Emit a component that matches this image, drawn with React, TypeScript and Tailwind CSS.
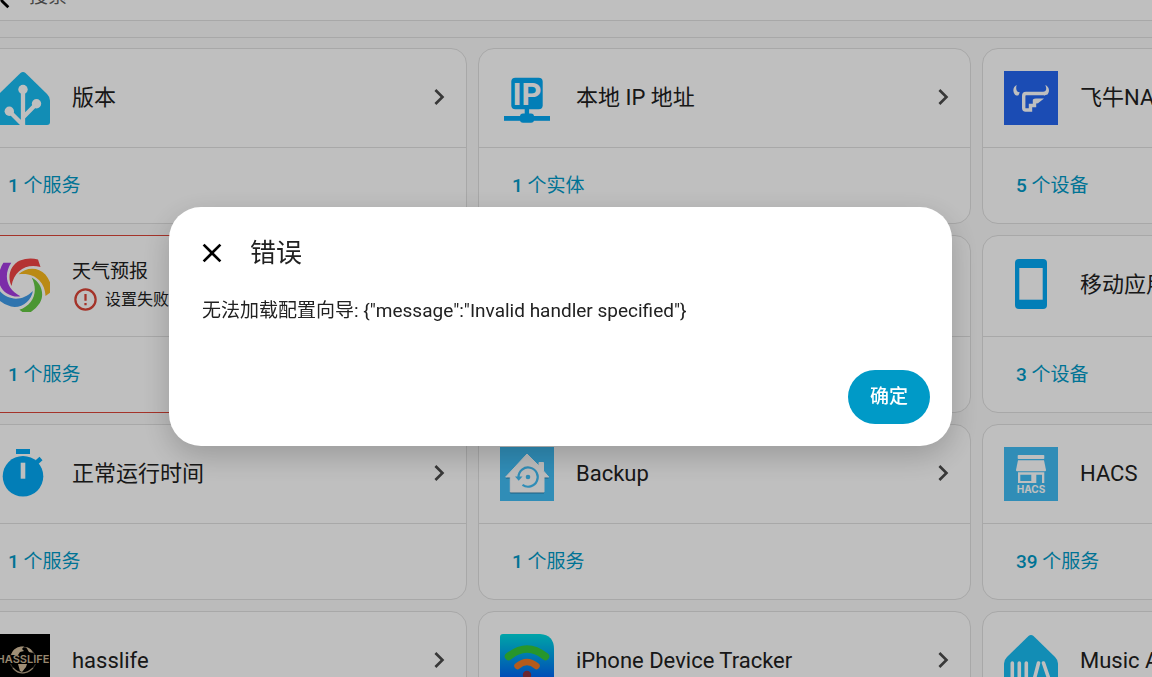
import type { ReactNode } from "react";

const HOUSE =
  "M24.5 2Q27 0 29.5 2L51 23Q54 26 54 29.5V51Q54 54 51 54H3Q0 54 0 51V29.5Q0 26 3 23Z";
const BACKUP_HOUSE =
  "M27 7L39 19V15.500H43.500V24L48.700 30H44V45H10.300V30H5.700Z";
const PETAL =
  "M15.500 28C11 19 14 7 24 2.500Q33 -1 42 1.500L44.500 9C31 5 18 12 15.500 28Z";
const PETALS = ["#f04444", "#f8b91c", "#64c843", "#3f9be8", "#a53de0"];

function Logo({ children }: { children: ReactNode }) {
  return (
    <svg className="size-[54px] shrink-0" viewBox="0 0 54 54" aria-hidden="true">
      {children}
    </svg>
  );
}

function HomeAssistantLogo() {
  return (
    <Logo>
      <path d={HOUSE} fill="#18bcf2" />
      <g stroke="#fff" strokeWidth="4.300" fill="none">
        <path d="M27 18V54M40.500 32.700L27 46.500M13.300 40.300L28 55" />
      </g>
      <g fill="#fff">
        <circle cx="27" cy="18.500" r="4.700" />
        <circle cx="40.500" cy="32.700" r="4.700" />
        <circle cx="13.300" cy="40.300" r="4.700" />
      </g>
    </Logo>
  );
}

function IpLogo() {
  return (
    <Logo>
      <g fill="#03a9f4">
        <rect x="11.300" y="6.700" width="31.400" height="31.500" rx="4" />
        <rect x="24.700" y="38" width="4.400" height="6" />
        <rect x="20" y="42.500" width="14" height="9.300" rx="3" />
        <rect x="4" y="45" width="46" height="4.800" />
      </g>
      <text
        x="27"
        y="34"
        textAnchor="middle"
        fill="#fff"
        fontFamily="Roboto, sans-serif"
        fontWeight="700"
        fontSize="31"
      >
        IP
      </text>
    </Logo>
  );
}

function FnosLogo() {
  return (
    <Logo>
      <rect width="54" height="54" fill="#2566f0" />
      <path
        d="M12.700 14C9 16 8.500 20 10.500 23C11.500 24.800 14 25 14.600 24L15.800 21.300C13 21.500 11.300 18.500 12.700 14Z"
        fill="#fff"
      />
      <path
        d="M41.300 14C45.500 16 46 20.500 43.500 23.500L40 24.500L39 21C42.500 20.500 43 18 41.300 14Z"
        fill="#fff"
      />
      <path
        d="M41 22.500H22Q19.700 22.500 19.700 25V37Q19.700 39 21.700 39H26.500V34.500H30.500V30.500H33.500"
        fill="none"
        stroke="#fff"
        strokeWidth="3.400"
      />
      <path d="M29 28.500Q30 27.500 32 27.500H40L34 32.200H29Z" fill="#fff" />
    </Logo>
  );
}

function WeatherLogo() {
  return (
    <Logo>
      {PETALS.map((color, i) => (
        <path key={color} d={PETAL} fill={color} transform={`rotate(${i * 72} 27 27)`} />
      ))}
    </Logo>
  );
}

function PhoneLogo() {
  return (
    <Logo>
      <rect x="11" y="1" width="32" height="50" rx="4" fill="#03a9f4" />
      <rect x="15.300" y="10" width="23.400" height="31.700" fill="#fff" />
    </Logo>
  );
}

function TimerLogo() {
  return (
    <Logo>
      <g fill="#03a9f4">
        <circle cx="27" cy="29.300" r="20.300" />
        <rect x="20" y="2" width="14" height="5" />
      </g>
      <path d="M40 16L45 11.500" stroke="#03a9f4" strokeWidth="4.500" />
      <rect x="24.700" y="15.700" width="4.600" height="16" fill="#fff" />
    </Logo>
  );
}

function BackupLogo() {
  return (
    <Logo>
      <rect width="54" height="54" fill="#41bdf5" />
      <path d={BACKUP_HOUSE} fill="#2c80ab" transform="translate(0 1.500)" />
      <path d={BACKUP_HOUSE} fill="#fcfcfc" stroke="#fcfcfc" strokeLinejoin="round" />
      <path
        d="M18.500 30A9.600 9.600 0 1 1 22.500 37.900"
        fill="none"
        stroke="#41bdf5"
        strokeWidth="2.200"
      />
      <path d="M15 29.500H22.500L18.700 33.800Z" fill="#41bdf5" />
      <circle cx="28" cy="30" r="2.300" fill="#41bdf5" />
    </Logo>
  );
}

function HacsLogo() {
  return (
    <Logo>
      <rect width="54" height="54" fill="#41bdf5" />
      <g fill="#fff">
        <rect x="13.700" y="8" width="26.600" height="4" rx="0.800" />
        <path d="M14 13.200H40L42 23Q42 24.300 41 24.300H13Q12 24.300 12 23Z" />
        <path
          fillRule="evenodd"
          d="M14 25.300H40.300V36H38V27.700H32.300V36H14ZM16.300 27.700V34H27.300V27.700Z"
        />
      </g>
      <text
        x="27"
        y="46"
        textAnchor="middle"
        fill="#fff"
        fontFamily="Inter, sans-serif"
        fontWeight="700"
        fontSize="10"
      >
        HACS
      </text>
    </Logo>
  );
}

function HasslifeLogo() {
  return (
    <Logo>
      <rect width="54" height="54" fill="#000" />
      <circle cx="27" cy="26" r="13" fill="none" stroke="#6e6455" strokeWidth="0.800" />
      <path
        d="M15 21C17 14 23 12 28 12.500L26 15L28 17L24 18L22 21ZM30 13C34 14 36 16 37 19L33 18Z"
        fill="#d6bf9e"
      />
      <path d="M22 30H31L30 33L26 38L24 37Z" fill="#d6bf9e" />
      <path d="M17 34Q26 44 37 34" fill="none" stroke="#b8a488" strokeWidth="1.200" />
      <rect y="21.500" width="54" height="8.500" fill="#000" />
      <text
        x="27"
        y="29"
        textAnchor="middle"
        fill="#c9b496"
        fontFamily="Inter, sans-serif"
        fontWeight="600"
        fontSize="11"
      >
        HASSLIFE
      </text>
    </Logo>
  );
}

function TrackerLogo() {
  return (
    <Logo>
      <defs>
        <linearGradient id="tracker" x1="0" y1="0" x2="0" y2="1">
          <stop offset="0" stopColor="#00dbe0" />
          <stop offset="0.800" stopColor="#0068f5" />
          <stop offset="1" stopColor="#0050f0" />
        </linearGradient>
      </defs>
      <path d="M3 0H40Q54 1 54 15V54H0V3Q0 0 3 0Z" fill="url(#tracker)" />
      <g fill="none" strokeLinecap="round">
        <path d="M8.500 22.500Q27 7.500 45.500 22.500" stroke="#35c93a" strokeWidth="7.500" />
        <path d="M17.500 32Q27 24 36.500 32" stroke="#f07a26" strokeWidth="6.500" />
      </g>
      <circle cx="27" cy="41" r="4.200" fill="#8f3340" />
    </Logo>
  );
}

function MusicLogo() {
  return (
    <Logo>
      <path d={HOUSE} fill="#18bcf2" />
      <path
        d="M8.300 29V54M15.300 29V54M22.300 29V54M34.500 29L28 54M39.500 29L48 54"
        stroke="#fff"
        strokeWidth="3.600"
        strokeLinecap="round"
      />
    </Logo>
  );
}

type CardProps = {
  logo?: ReactNode;
  title?: string;
  count?: number;
  unit?: string;
  error?: string;
  tall?: boolean;
};

function Card({ logo, title, count, unit, error, tall }: CardProps) {
  return (
    <article
      className={`rounded-2xl border bg-white ${error ? "border-[#db4437]" : "border-[#e0e0e0]"}`}
    >
      <div
        className={`flex items-start gap-[22px] border-b border-[#e0e0e0] pt-[22px] pr-[11px] pl-[21px] ${tall ? "h-[101px]" : "h-[99px]"}`}
      >
        {logo}
        {error ? (
          <div className="grow">
            <h2 className="text-[19px] leading-[28px]">{title}</h2>
            <p className="flex items-center gap-[6px] text-[16px] leading-[27px]">
              <svg className="size-[27px]" viewBox="0 0 24 24" fill="#db4437" aria-hidden="true">
                <path d="M11,15H13V17H11V15M11,7H13V13H11V7M12,2C6.470,2 2,6.500 2,12A10,10 0 0,0 12,22A10,10 0 0,0 22,12A10,10 0 0,0 12,2M12,20A8,8 0 0,1 4,12A8,8 0 0,1 12,4A8,8 0 0,1 20,12A8,8 0 0,1 12,20Z" />
              </svg>
              {error}
            </p>
          </div>
        ) : (
          <h2 className="grow text-[22px] leading-[54px] whitespace-nowrap">{title}</h2>
        )}
        {title && (
          <button type="button" aria-label={title} className="flex h-[52px] items-center">
            <svg className="size-8" viewBox="0 0 24 24" fill="#4b4b4b" aria-hidden="true">
              <path d="M8.590,16.580L13.170,12L8.590,7.410L10,6L16,12L10,18L8.590,16.580Z" />
            </svg>
          </button>
        )}
      </div>
      <div className="flex h-[75px] items-center px-[33px]">
        {unit && (
          <a href="#" className="text-[19px] leading-[28px] text-[#009ac7]">
            <span className="font-medium">{count}</span> {unit}
          </a>
        )}
      </div>
    </article>
  );
}

export default function App() {
  return (
    <div className="h-screen overflow-hidden bg-[#fafafa] font-[Roboto,'Noto_Sans_CJK_SC',sans-serif] text-[#212121]">
      <header className="h-[38px] overflow-hidden border-b border-[#e0e0e0]">
        <label className="-mt-[33px] -ml-[18px] flex h-[54px] items-center gap-[15px] border-b border-[#e0e0e0] bg-white pt-[7px]">
          <svg className="size-8 shrink-0" viewBox="0 0 24 24" aria-hidden="true">
            <path d="M9.500,3A6.500,6.500 0 0,1 16,9.500C16,11.110 15.410,12.590 14.440,13.730L14.710,14H15.500L20.500,19L19,20.500L14,15.500V14.710L13.730,14.440C12.590,15.410 11.110,16 9.500,16A6.500,6.500 0 0,1 3,9.500A6.500,6.500 0 0,1 9.500,3Z" />
          </svg>
          <input
            type="text"
            placeholder="搜索"
            aria-label="搜索"
            className="grow text-[19px] leading-[28px] outline-none placeholder:text-[#5e5e5e]"
          />
        </label>
      </header>

      <main className="mt-[10px] -ml-[26px] grid grid-cols-[repeat(3,minmax(493px,1fr))] gap-[11px]">
        <Card logo={<HomeAssistantLogo />} title="版本" count={1} unit="个服务" />
        <Card logo={<IpLogo />} title="本地 IP 地址" count={1} unit="个实体" />
        <Card logo={<FnosLogo />} title="飞牛NAS" count={5} unit="个设备" />
        <Card tall logo={<WeatherLogo />} title="天气预报" error="设置失败" count={1} unit="个服务" />
        <Card tall />
        <Card tall logo={<PhoneLogo />} title="移动应用" count={3} unit="个设备" />
        <Card logo={<TimerLogo />} title="正常运行时间" count={1} unit="个服务" />
        <Card logo={<BackupLogo />} title="Backup" count={1} unit="个服务" />
        <Card logo={<HacsLogo />} title="HACS" count={39} unit="个服务" />
        <Card logo={<HasslifeLogo />} title="hasslife" />
        <Card logo={<TrackerLogo />} title="iPhone Device Tracker" />
        <Card logo={<MusicLogo />} title="Music Assistant" />
      </main>

      <div className="fixed inset-0 flex items-center justify-center bg-black/25 pr-[31px] pb-6">
        <div
          role="dialog"
          aria-modal="true"
          aria-labelledby="dialog-title"
          className="w-full max-w-[783px] rounded-[32px] bg-white shadow-[0_10px_30px_rgba(0,0,0,0.2)]"
        >
          <div className="flex items-center gap-[22px] px-[27px] pt-[27px]">
            <button type="button" aria-label="关闭">
              <svg className="size-8" viewBox="0 0 24 24" aria-hidden="true">
                <path d="M19,6.410L17.590,5L12,10.590L6.410,5L5,6.410L10.590,12L5,17.590L6.410,19L12,13.410L17.590,19L19,17.590L13.410,12L19,6.410Z" />
              </svg>
            </button>
            <h1 id="dialog-title" className="text-[26px] leading-[38px]">
              错误
            </h1>
          </div>
          <p className="px-[33px] pt-[25px] text-[19px] leading-[28px]">
            {'无法加载配置向导: {"message":"Invalid handler specified"}'}
          </p>
          <div className="flex justify-end px-[22px] pt-[45px] pb-[22px]">
            <button
              type="button"
              className="h-[54px] rounded-full bg-[#009ac7] px-[22px] text-[19px] font-medium text-white"
            >
              确定
            </button>
          </div>
        </div>
      </div>
    </div>
  );
}
